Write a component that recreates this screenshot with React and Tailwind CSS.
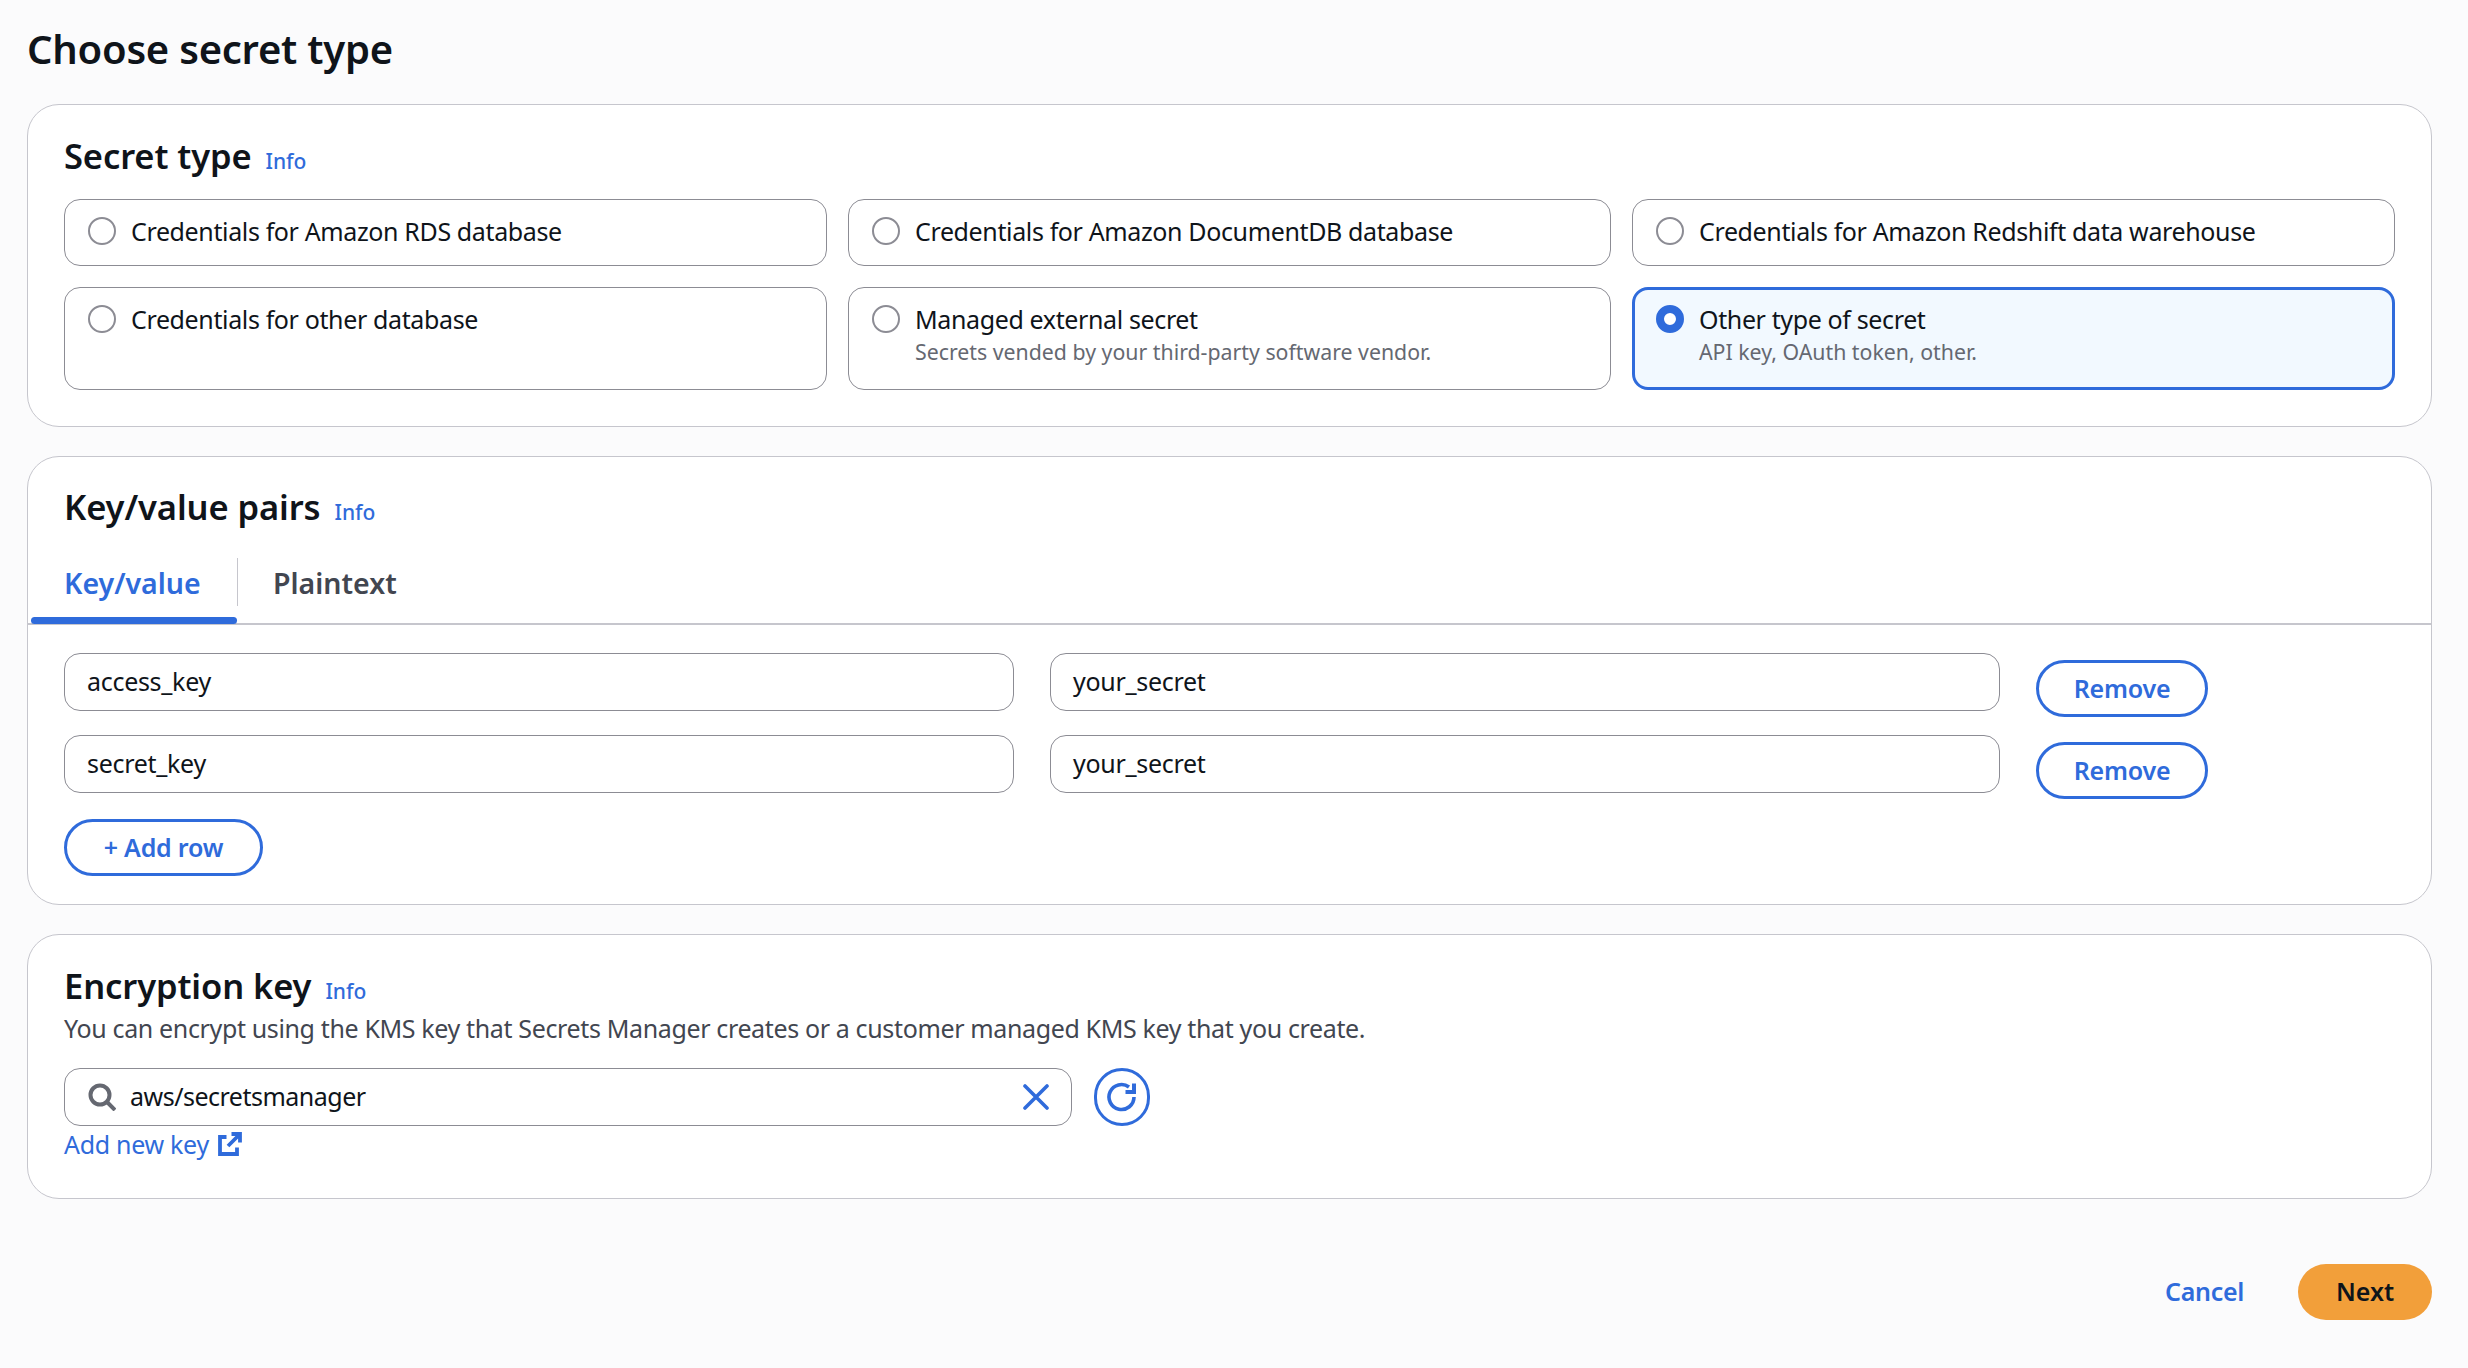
import React from 'react';

const secretTypes = [
  { label: 'Credentials for Amazon RDS database' },
  { label: 'Credentials for Amazon DocumentDB database' },
  { label: 'Credentials for Amazon Redshift data warehouse' },
  { label: 'Credentials for other database' },
  { label: 'Managed external secret', hint: 'Secrets vended by your third-party software vendor.' },
  { label: 'Other type of secret', hint: 'API key, OAuth token, other.', selected: true },
];

const rows = [
  { key: 'access_key', value: 'your_secret' },
  { key: 'secret_key', value: 'your_secret' },
];

const Card = ({ className, children }) => (
  <section className={`rounded-[32px] border border-[#c6c6cd] bg-white ${className}`}>{children}</section>
);

const Heading = ({ title }) => (
  <div className="flex items-baseline gap-[14px]">
    <h2 className="text-[34.5px] leading-[44px] font-semibold tracking-[-0.1px] text-[#0f141a]">{title}</h2>
    <a className="text-[21px] font-medium text-[#2f6bdb]">Info</a>
  </div>
);

const RadioCard = ({ label, hint, selected }) => (
  <div
    className={`flex items-start gap-[15px] rounded-[16px] ${
      selected
        ? 'border-[3px] border-[#2f6bdb] bg-[#f2f9ff] px-[21px] pt-[14px]'
        : 'border border-[#8c8c94] bg-white px-[23px] pt-[16px]'
    }`}
  >
    {selected ? (
      <span className="mt-[1px] h-[28px] w-[28px] shrink-0 rounded-full border-[8px] border-[#2f6bdb] bg-white" />
    ) : (
      <span className="mt-[1px] h-[28px] w-[28px] shrink-0 rounded-full border-2 border-[#8c8c94] bg-white" />
    )}
    <div>
      <div className="text-[25px] leading-[30px] tracking-[-0.37px] text-[#0f141a]">{label}</div>
      {hint && <div className="mt-[3px] text-[21.3px] leading-[30px] text-[#656871]">{hint}</div>}
    </div>
  </div>
);

const Field = ({ children }) => (
  <div className="flex h-[58px] w-[950px] items-center rounded-[16px] border border-[#8c8c94] bg-white px-[22px] text-[25px] tracking-[-0.3px] text-[#0f141a]">
    {children}
  </div>
);

const OutlineButton = ({ children, className }) => (
  <button
    type="button"
    className={`h-[57px] rounded-full border-[3px] border-[#2f6bdb] bg-white text-[25px] font-semibold tracking-[-0.2px] text-[#2f6bdb] ${className}`}
  >
    {children}
  </button>
);

const SearchIcon = () => (
  <svg width="28" height="28" viewBox="0 0 28 28" fill="none" stroke="#656871" strokeWidth="4">
    <circle cx="12" cy="12" r="9.5" />
    <path d="M19 19l8 8" />
  </svg>
);

const ClearIcon = () => (
  <svg width="26" height="26" viewBox="0 0 26 26" fill="none" stroke="#2f6bdb" strokeWidth="3.6" strokeLinecap="round">
    <path d="M2 2l22 22M24 2L2 24" />
  </svg>
);

const RefreshIcon = () => (
  <svg width="30" height="30" viewBox="0 0 30 30" fill="none" stroke="#2f6bdb" strokeWidth="3.6">
    <path d="M27 15a12.5 12.5 0 1 1-5-10" />
    <path d="M27 1.5v8.5h-8.5" strokeWidth="4" />
  </svg>
);

const ExternalIcon = () => (
  <svg width="24" height="24" viewBox="0 0 24 24" fill="none" stroke="#2f6bdb" strokeWidth="3.8">
    <path d="M8.5 5H2v17h17v-6.5" />
    <path d="M13.5 2H22v8.5M22 2L10 14" />
  </svg>
);

export default function App() {
  return (
    <div className="min-h-[1368px] bg-[#fbfbfc] pr-[36px] pl-[27px] font-['Noto_Sans',sans-serif]">
      <h1 className="pt-[21px] text-[40px] leading-[56px] font-semibold tracking-[-0.25px] text-[#0f141a]">Choose secret type</h1>

      <Card className="mt-[27px] h-[323px] px-[36px] pt-[29px]">
        <Heading title="Secret type" />
        <div className="mt-[21px] grid grid-cols-3 grid-rows-[67px_103px] gap-x-[21px] gap-y-[21px]">
          {secretTypes.map((type) => (
            <RadioCard key={type.label} {...type} />
          ))}
        </div>
      </Card>

      <Card className="mt-[29px] h-[449px] pt-[28px]">
        <div className="px-[36px]">
          <Heading title="Key/value pairs" />
        </div>
        <div className="mt-[29px] flex h-[67px] border-b-2 border-[#c6c6cd] px-[3px]">
          <div className="relative flex h-[66px] w-[206px] items-start pl-[33px] text-[28.5px] leading-[50px] font-semibold text-[#2f6bdb]">
            Key/value
            <span className="absolute right-0 bottom-0 left-0 h-[7px] rounded-[4px] bg-[#2f6bdb]" />
          </div>
          <div className="h-[48px] w-px bg-[#c6c6cd]" />
          <div className="pl-[35px] text-[28.5px] leading-[50px] font-semibold text-[#424650]">Plaintext</div>
        </div>
        <div className="mt-[28px] flex flex-col gap-[18px] pl-[36px]">
          {rows.map((row) => (
            <div key={row.key} className="flex gap-[36px]">
              <Field>{row.key}</Field>
              <Field>{row.value}</Field>
              <OutlineButton className="mt-[7px] w-[172px] shrink-0">Remove</OutlineButton>
            </div>
          ))}
        </div>
        <div className="mt-[20px] px-[36px]">
          <OutlineButton className="w-[199px]">+ Add row</OutlineButton>
        </div>
      </Card>

      <Card className="mt-[29px] h-[265px] px-[36px] pt-[29px]">
        <Heading title="Encryption key" />
        <p className="mt-[2px] text-[25px] leading-[36px] tracking-[-0.36px] text-[#424650]">
          You can encrypt using the KMS key that Secrets Manager creates or a customer managed KMS key that you create.
        </p>
        <div className="mt-[22px] flex items-center gap-[22px]">
          <div className="flex h-[58px] w-[1008px] items-center rounded-[16px] border border-[#8c8c94] bg-white pr-[22px] pl-[23px] text-[25px] tracking-[-0.5px] text-[#0f141a]">
            <SearchIcon />
            <span className="ml-[14px] flex-1">aws/secretsmanager</span>
            <ClearIcon />
          </div>
          <button
            type="button"
            className="flex h-[58px] w-[56px] items-center justify-center rounded-full border-[3px] border-[#2f6bdb] bg-white"
          >
            <RefreshIcon />
          </button>
        </div>
        <a className="mt-[1px] flex items-center gap-[9px] text-[25px] leading-[34px] tracking-[-0.3px] text-[#2f6bdb]">
          Add new key
          <ExternalIcon />
        </a>
      </Card>

      <div className="mt-[65px] flex items-center justify-end">
        <a className="text-[25px] font-semibold tracking-[-0.3px] text-[#2f6bdb]">Cancel</a>
        <button
          type="button"
          className="ml-[54px] h-[56px] w-[134px] rounded-full bg-[#f29f3a] text-[25px] font-semibold text-[#0f141a]"
        >
          Next
        </button>
      </div>
    </div>
  );
}
